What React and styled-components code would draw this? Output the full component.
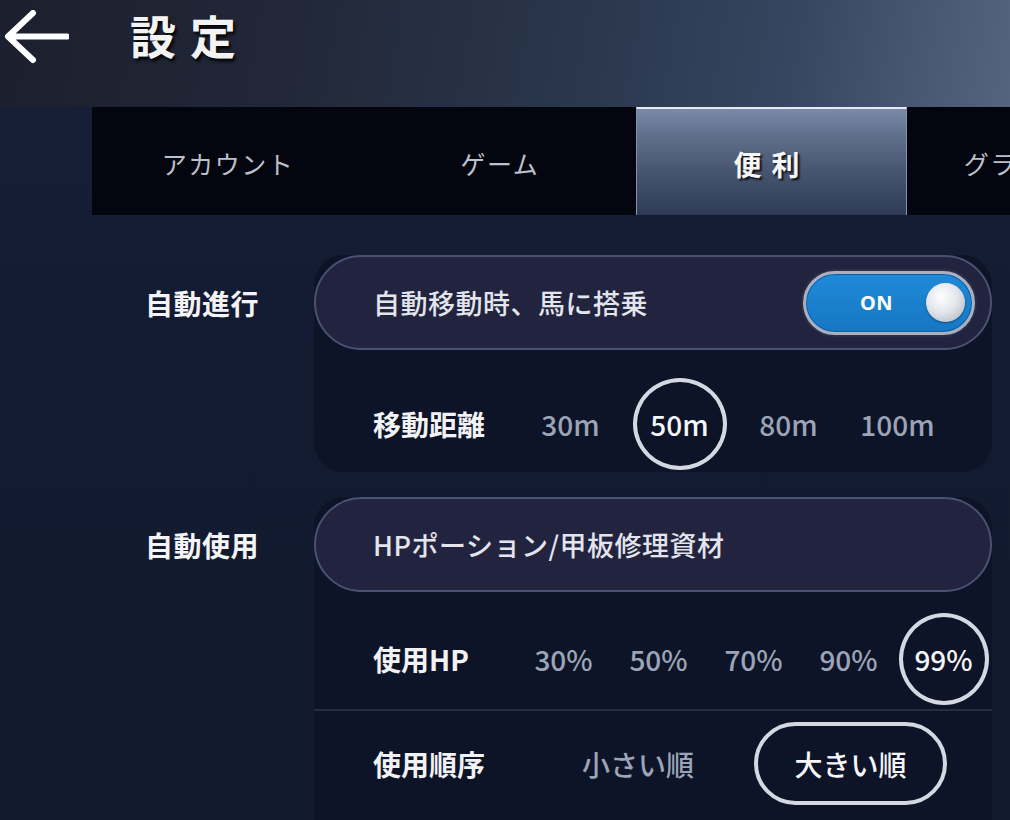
import React from "react";
import styled, { createGlobalStyle, css } from "styled-components";

const GlobalStyle = createGlobalStyle`
  html, body { margin: 0; padding: 0; background: #111a2e; }
  body { font-family: "Noto Sans CJK JP", "Noto Sans", sans-serif; }
  * { box-sizing: border-box; }
`;

const Page = styled.div`
  width: 1010px;
  height: 820px;
  overflow: hidden;
  background: linear-gradient(180deg, #182139 0%, #121b31 40%, #111a2e 100%);
  display: flex;
  flex-direction: column;
`;

const Header = styled.header`
  height: 107px;
  flex: 0 0 107px;
  display: flex;
  align-items: flex-start;
  padding: 10px 0 0 3px;
  background: linear-gradient(100deg, #1c1f2d 0%, #222839 30%, #2a374d 58%, #364660 78%, #56637f 100%);
`;

const BackIcon = styled.svg`
  width: 66px;
  height: 54px;
  flex: 0 0 auto;
`;

const Title = styled.h1`
  margin: 0 0 0 61px;
  font-size: 46px;
  line-height: 48px;
  font-weight: 700;
  letter-spacing: 14px;
  color: #f3f3f3;
  text-shadow: 2px 3px 3px rgba(0, 0, 0, 0.85);
`;

const TabBar = styled.nav`
  margin-left: 92px;
  height: 108px;
  flex: 0 0 108px;
  display: flex;
  background: #03060e;
  overflow: hidden;
`;

const Tab = styled.div`
  flex: 0 0 272px;
  display: flex;
  align-items: center;
  justify-content: center;
  padding-top: 4px;
  font-size: 25px;
  letter-spacing: 1.5px;
  color: #bcc0ca;
  white-space: nowrap;
  ${(p) =>
    p.$active &&
    css`
      flex-basis: 271px;
      font-size: 28px;
      font-weight: 700;
      letter-spacing: 10px;
      color: #f6f6f6;
      text-shadow: 2px 2px 2px rgba(0, 0, 0, 0.8);
      border-top: 2px solid #e4eaf3;
      border-left: 1px solid #8190ab;
      border-right: 1px solid #8190ab;
      background: linear-gradient(180deg, #7a8aa8 0%, #63728f 22%, #46546f 60%, #2e3b56 100%);
    `}
`;

const Content = styled.main`
  display: flex;
  flex-direction: column;
  gap: 25px;
  padding: 40px 18px 0 0;
`;

const Section = styled.section`
  display: grid;
  grid-template-columns: 314px 678px;
  align-items: start;
`;

const SectionLabel = styled.div`
  height: 95px;
  display: flex;
  align-items: center;
  padding-left: 145px;
  font-size: 28px;
  font-weight: 700;
  letter-spacing: 0.5px;
  color: #f4f4f6;
`;

const Card = styled.div`
  background: #0d1427;
  border-radius: 30px;
  display: flex;
  flex-direction: column;
  padding-bottom: ${(p) => p.$pb || 0}px;
  min-height: ${(p) => p.$minH || 0}px;
`;

const Pill = styled.div`
  height: 95px;
  border: 2px solid #4a5171;
  border-radius: 48px;
  background: #22243f;
  display: flex;
  align-items: center;
  justify-content: space-between;
  padding: 0 15px 0 57px;
  font-size: 27px;
  font-weight: 500;
  letter-spacing: 0.5px;
  color: #e3e5ed;
`;

const Toggle = styled.div`
  width: 172px;
  height: 64px;
  border-radius: 32px;
  border: 3px solid #aab0c0;
  box-shadow: 0 0 0 2px #2b3049, inset 0 0 0 1px #0d5fa6;
  background: linear-gradient(180deg, #1f8ad8 0%, #1677c4 100%);
  display: flex;
  align-items: center;
  padding: 0 7px 0 54px;
`;

const ToggleText = styled.span`
  font-family: "Noto Sans", "Roboto", sans-serif;
  font-size: 20px;
  font-weight: 700;
  color: #ffffff;
`;

const Knob = styled.span`
  margin-left: auto;
  width: 39px;
  height: 39px;
  border-radius: 50%;
  background: radial-gradient(circle at 40% 35%, #ffffff 0%, #e4e6ec 45%, #a9aebb 100%);
  box-shadow: 0 1px 2px rgba(0, 0, 0, 0.4);
`;

const OptionRow = styled.div`
  display: flex;
  align-items: center;
  height: ${(p) => p.$h}px;
  margin-top: ${(p) => p.$mt}px;
  padding-left: 59px;
  gap: ${(p) => p.$gap || 0}px;
`;

const RowLabel = styled.div`
  width: ${(p) => p.$w}px;
  flex: 0 0 auto;
  font-size: 28px;
  font-weight: 700;
  color: #f2f2f5;
  white-space: nowrap;
`;

const OptionCell = styled.div`
  width: ${(p) => p.$w}px;
  flex: 0 0 auto;
  display: flex;
  align-items: center;
  justify-content: center;
`;

const Chip = styled.div`
  width: ${(p) => p.$w}px;
  height: ${(p) => p.$h}px;
  display: flex;
  align-items: center;
  justify-content: center;
  border-radius: ${(p) => (p.$round ? "50%" : `${p.$h / 2}px`)};
  border: 4px solid ${(p) => (p.$selected ? "#d4d8e3" : "transparent")};
  font-size: 28px;
  font-weight: 500;
  color: ${(p) => (p.$selected ? "#f5f6f9" : "#9ca4b7")};
  white-space: nowrap;
`;

const Divider = styled.div`
  height: 2px;
  background: #262d43;
  margin-top: ${(p) => p.$mt}px;
`;

function Options({ items, selected, cellW, chipW, chipH, round }) {
  return items.map((t) => (
    <OptionCell key={t} $w={typeof cellW === "function" ? cellW(t) : cellW}>
      <Chip
        $w={typeof chipW === "function" ? chipW(t) : chipW}
        $h={chipH}
        $round={round}
        $selected={t === selected}
      >
        {t}
      </Chip>
    </OptionCell>
  ));
}

export default function App() {
  return (
    <>
      <GlobalStyle />
      <Page>
        <Header>
          <BackIcon viewBox="0 0 66 54" fill="none">
            <path
              d="M64 26.5H6 M30 3L5 26.5L30 50"
              stroke="#ffffff"
              strokeWidth="6"
              strokeLinecap="round"
              strokeLinejoin="round"
            />
          </BackIcon>
          <Title>設定</Title>
        </Header>
        <TabBar>
          <Tab>アカウント</Tab>
          <Tab>ゲーム</Tab>
          <Tab $active>便利</Tab>
          <Tab>グラフィック</Tab>
        </TabBar>
        <Content>
          <Section>
            <SectionLabel>自動進行</SectionLabel>
            <Card $pb={2}>
              <Pill>
                <span>自動移動時、馬に搭乗</span>
                <Toggle>
                  <ToggleText>ON</ToggleText>
                  <Knob />
                </Toggle>
              </Pill>
              <OptionRow $h={92} $mt={28}>
                <RowLabel $w={143}>移動距離</RowLabel>
                <Options
                  items={["30m", "50m", "80m", "100m"]}
                  selected="50m"
                  cellW={109}
                  chipW={94}
                  chipH={92}
                  round
                />
              </OptionRow>
            </Card>
          </Section>
          <Section>
            <SectionLabel>自動使用</SectionLabel>
            <Card $minH={360}>
              <Pill>
                <span>HPポーション/甲板修理資材</span>
              </Pill>
              <OptionRow $h={92} $mt={21}>
                <RowLabel $w={143}>使用HP</RowLabel>
                <Options
                  items={["30%", "50%", "70%", "90%", "99%"]}
                  selected="99%"
                  cellW={95}
                  chipW={90}
                  chipH={92}
                  round
                />
              </OptionRow>
              <Divider $mt={4} />
              <OptionRow $h={83} $mt={11} $gap={11}>
                <RowLabel $w={149}>使用順序</RowLabel>
                <Options
                  items={["小さい順", "大きい順"]}
                  selected="大きい順"
                  cellW={(t) => (t === "小さい順" ? 210 : 193)}
                  chipW={193}
                  chipH={83}
                />
              </OptionRow>
            </Card>
          </Section>
        </Content>
      </Page>
    </>
  );
}
